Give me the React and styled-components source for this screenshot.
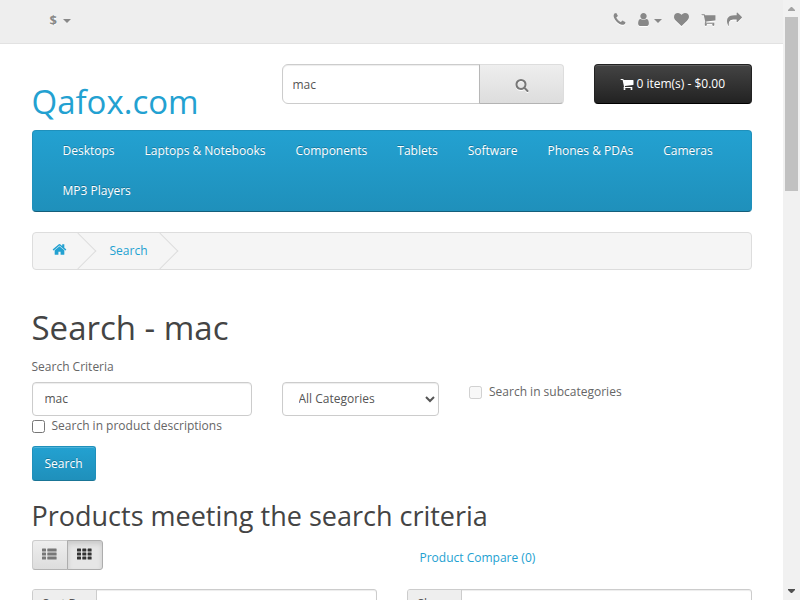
import React from "react";
import styled, { createGlobalStyle, css } from "styled-components";

const Global = createGlobalStyle`
  *, *::before, *::after { box-sizing: border-box; }
  html, body { margin: 0; overflow: hidden; background: #fff; }
  body, input, select, button {
    font-family: "Open Sans", sans-serif;
    font-size: 12px;
    line-height: 20px;
    font-weight: 400;
    color: #666;
  }
  h1, h2, p { margin: 0; font-weight: 400; }
`;

const icons = {
  phone: "M1600 1240q0 27-10 70.5t-21 68.5q-21 50-122 106-94 51-186 51-27 0-53-3.5t-57-12.5-47-14.5-55.5-20.5-49.5-18q-98-35-175-83-127-79-264-216t-216-264q-48-77-83-175-3-9-18-49.5t-20.5-55.5-14.5-47-12.5-57-3.5-53q0-92 51-186 56-101 106-122 25-11 68.5-21t70.5-10q14 0 21 3 18 6 53 76 11 19 30 54t35 63.5 31 53.5q3 4 17.5 25t21.5 35.5 7 28.5q0 20-28.5 50t-62 55-62 53-28.5 46q0 9 5 22.5t8.5 20.5 14 24 11.5 19q76 137 174 235t235 174q2 1 19 11.5t24 14 20.5 8.5 22.5 5q18 0 46-28.5t53-62 55-62 50-28.5q14 0 28.5 7t35.5 21.5 25 17.5q25 15 53.5 31t63.5 35 54 30q70 35 76 53 3 7 3 21z",
  user: "M1536 1399q0 109-62.5 187t-150.5 78h-854q-88 0-150.5-78t-62.5-187q0-85 8.5-160.5t31.5-152 58.5-131 94-89 134.5-34.5q131 128 313 128t313-128q76 0 134.5 34.5t94 89 58.5 131 31.5 152 8.5 160.5zm-256-887q0 159-112.5 271.5t-271.5 112.5-271.5-112.5-112.5-271.5 112.5-271.5 271.5-112.5 271.5 112.5 112.5 271.5z",
  heart: "M896 1664q-26 0-44-18l-624-602q-10-8-27.5-26t-55.5-65.5-68-97.5-53.5-121-23.5-138q0-220 127-344t351-124q62 0 126.5 21.5t120 58 95.5 68.5 76 68q36-36 76-68t95.5-68.5 120-58 126.5-21.5q224 0 351 124t127 344q0 221-229 450l-623 600q-18 18-44 18z",
  cart: "M704 1536q0 52-38 90t-90 38-90-38-38-90 38-90 90-38 90 38 38 90zm896 0q0 52-38 90t-90 38-90-38-38-90 38-90 90-38 90 38 38 90zm128-1088v512q0 24-16.5 42.5t-40.5 21.5l-1044 122q13 60 13 70 0 16-24 64h920q26 0 45 19t19 45-19 45-45 19h-1024q-26 0-45-19t-19-45q0-11 8-31.5t16-36 21.5-40 15.5-29.5l-177-823h-204q-26 0-45-19t-19-45 19-45 45-19h256q16 0 28.5 6.5t19.5 15.5 13 24.5 8 26 5.5 29.5 4.5 26h1201q26 0 45 19t19 45z",
  share: "M1792 640q0 26-19 45l-512 512q-19 19-45 19t-45-19-19-45v-256h-224q-98 0-175.5 6t-154 21.5-133 42.5-105.5 69.5-80 101-48.5 138.5-17.5 181q0 55 5 123 0 6 2.5 23.5t2.5 26.5q0 15-8.5 25t-23.5 10q-16 0-28-17-7-9-13-22t-13.5-30-10.5-24q-127-285-127-451 0-199 53-333 162-403 875-403h224v-256q0-26 19-45t45-19 45 19l512 512q19 19 19 45z",
  search: "M1216 832q0-185-131.5-316.5t-316.5-131.5-316.5 131.5-131.5 316.5 131.5 316.5 316.5 131.5 316.5-131.5 131.5-316.5zm512 832q0 52-38 90t-90 38q-54 0-90-38l-343-342q-179 124-399 124-143 0-273.5-55.5t-225-150-150-225-55.5-273.5 55.5-273.5 150-225 225-150 273.5-55.5 273.5 55.5 225 150 150 225 55.5 273.5q0 220-124 399l343 343q37 37 37 90z",
  home: "M1472 992v480q0 26-19 45t-45 19h-384v-384h-256v384h-384q-26 0-45-19t-19-45v-480q0-1 .5-3t.5-3l575-474 575 474q1 2 1 6zm223-69l-62 74q-8 9-21 11h-3q-13 0-21-7l-692-577-692 577q-12 8-24 7-13-2-21-11l-62-74q-8-10-7-23.5t11-21.5l719-599q32-26 76-26t76 26l244 204v-195q0-14 9-23t23-9h192q14 0 23 9t9 23v408l219 182q10 8 11 21.5t-7 23.5z",
};

const Svg = styled.svg`
  display: block;
  flex: none;
  fill: currentColor;
  filter: ${(p) => p.$glow && "drop-shadow(0 1px 0 #fff)"};
`;

function Icon({ name, size = 14, glow }) {
  return (
    <Svg width={size} height={size} viewBox="0 0 1792 1792" $glow={glow}>
      <path d={icons[name]} />
    </Svg>
  );
}

const Screen = styled.div`
  display: flex;
  width: 800px;
  height: 600px;
  overflow: hidden;
`;
const Page = styled.div`
  flex: 1;
  min-width: 0;
  overflow: hidden;
`;
const Container = styled.div`
  width: 720px;
  margin-left: 31.5px;
`;

const TopBar = styled.nav`
  height: 44px;
  background: #eee;
  border-bottom: 1px solid #e2e2e2;
  color: #888;
`;
const TopBarInner = styled(Container)`
  display: flex;
  justify-content: space-between;
  padding: 10px 9.5px 0 18px;
`;
const Currency = styled.div`
  display: flex;
  align-items: center;
  gap: 6px;
  height: 20px;
  font-size: 13px;
  font-weight: 700;
  text-shadow: 0 1px 0 #fff;
`;
const Caret = styled.span`
  border: 4.5px solid transparent;
  border-top: 4.5px solid currentColor;
  border-bottom: 0;
  margin-top: 2px;
`;
const TopLinks = styled.div`
  display: flex;
  align-items: center;
  gap: 11.5px;
  height: 18px;
`;
const Account = styled.span`
  display: flex;
  align-items: center;
  gap: 2.5px;
  margin-left: -2.5px;
  margin-right: 1px;
  ${Caret} { border-width: 4px 4px 0; margin-top: 4px; }
`;

const Header = styled(Container)`
  display: flex;
  height: 66px;
  margin-top: 20px;
`;
const Logo = styled.h1`
  width: 250px;
  padding-top: 20px;
  font-size: 33px;
  line-height: 36px;
  color: #23a1d1;
`;
const SearchBox = styled.div`
  display: flex;
  width: 282px;
  height: 40px;
`;

const raised = css`
  display: flex;
  align-items: center;
  justify-content: center;
  padding: 0;
  border: 1px solid;
`;
const Input = styled.input`
  width: ${(p) => p.$w}px;
  height: ${(p) => p.$h}px;
  padding: ${(p) => p.$drop || 0}px ${(p) => p.$pad}px 1px;
  border: 1px solid #ccc;
  border-radius: ${(p) => p.$radius || "4px"};
  background: #fff;
  color: #555;
  box-shadow: inset 0 1px 1px rgba(0, 0, 0, 0.075);
  outline: 0;
`;
const LookupButton = styled.button`
  ${raised}
  width: 85px;
  height: 40px;
  margin-left: -1px;
  padding: 2px 0 0 1px;
  color: #777;
  background: linear-gradient(#eee, #ddd);
  border-color: #ddd #ddd #b3b3b3 #b7b7b7;
  border-radius: 0 4px 4px 0;
`;
const CartButton = styled.button`
  ${raised}
  gap: 2.5px;
  width: 158px;
  height: 40px;
  margin-left: 30px;
  padding-bottom: 1px;
  color: #fff;
  background: linear-gradient(#444, #222);
  border-color: #222 #222 #000;
  border-radius: 4px;
  box-shadow: inset 0 1px 0 rgba(255, 255, 255, 0.15);
`;

const Menu = styled(Container)`
  display: flex;
  flex-wrap: wrap;
  align-content: flex-start;
  height: 82px;
  padding-left: 15px;
  background: linear-gradient(#23a1d1, #1f90bb);
  border: 1px solid;
  border-color: #1f90bb #1f90bb #145e7a;
  border-radius: 4px;
`;
const MenuItem = styled.a`
  height: 40px;
  padding: 10px 15px;
  color: #fff;
  text-shadow: 0 -1px 0 rgba(0, 0, 0, 0.25);
  white-space: nowrap;
`;

const Breadcrumb = styled(Container)`
  display: flex;
  height: 38px;
  margin-top: 20px;
  margin-bottom: 40px;
  border: 1px solid #ddd;
  border-radius: 4px;
  background: #f5f5f5;
  overflow: hidden;
`;
const Crumb = styled.span`
  position: relative;
  display: flex;
  align-items: center;
  width: ${(p) => p.$w}px;
  padding-left: ${(p) => p.$pad}px;
  color: #23a1d1;
  ${Svg} { margin-bottom: 3px; }
  &::after {
    content: "";
    position: absolute;
    top: 5px;
    right: -0.5px;
    width: 26px;
    height: 26px;
    border: 1px solid #ddd;
    border-left: 0;
    border-bottom: 0;
    transform: rotate(45deg);
  }
`;

const Title = styled.h1`
  font-size: 33px;
  line-height: 36px;
  color: #444;
`;
const Subtitle = styled.h2`
  margin-top: 20px;
  font-size: 27px;
  line-height: 30px;
  color: #444;
`;
const Criteria = styled.p`
  margin-top: 11px;
  height: 25px;
`;
const FieldRow = styled.div`
  display: flex;
  gap: 30px;
  height: 34px;
`;
const Select = styled.select`
  width: 157px;
  height: 34px;
  padding: 0 0 1px 12px;
  border: 1px solid #ccc;
  border-radius: 4px;
  background: #fff;
  color: #555;
  box-shadow: inset 0 1px 1px rgba(0, 0, 0, 0.075);
`;
const CheckLabel = styled.label`
  display: flex;
  align-items: center;
  gap: ${(p) => p.$gap || 7}px;
  height: 20px;
  input { width: 13px; height: 13px; margin: 1px 0 0; }
`;
const SearchButton = styled.button`
  ${raised}
  width: 64px;
  height: 35px;
  margin-top: 10px;
  color: #fff;
  background: linear-gradient(#23a1d1, #1f90bb);
  border-color: #1f90bb #1f90bb #197596;
  border-radius: 3px;
  box-shadow: inset 0 1px 0 rgba(255, 255, 255, 0.2);
  text-shadow: 0 -1px 0 rgba(0, 0, 0, 0.25);
`;

const Toolbar = styled.div`
  display: flex;
  height: 30px;
  margin-top: 9px;
`;
const ViewButton = styled.button`
  ${raised}
  width: 36px;
  height: 30px;
  padding-bottom: 2px;
  color: #777;
  background: linear-gradient(#eee, #ddd);
  border-color: #ccc #ccc #b3b3b3;
  border-radius: 3px 0 0 3px;
  ${(p) =>
    p.$active &&
    css`
      margin-left: -1px;
      color: #333;
      background: #e6e6e6;
      border-color: #adadad;
      border-radius: 0 3px 3px 0;
      box-shadow: inset 0 3px 5px rgba(0, 0, 0, 0.125);
    `}
`;
const Compare = styled.a`
  margin: 8px 0 0 317px;
  color: #23a1d1;
`;
const Filters = styled.div`
  display: flex;
  gap: 30px;
  margin-top: 19px;
`;
const Group = styled.div`
  display: flex;
  width: 345px;
  height: 30px;
  border: 1px solid #ccc;
  border-radius: 3px;
  box-shadow: inset 0 1px 1px rgba(0, 0, 0, 0.075);
  overflow: hidden;
`;
const Addon = styled.label`
  width: ${(p) => p.$w}px;
  padding: 4px 10px;
  background: #eee;
  border-right: 1px solid #ccc;
  color: #555;
  white-space: nowrap;
`;

const Scrollbar = styled.div`
  display: flex;
  flex-direction: column;
  align-items: center;
  justify-content: space-between;
  width: 17px;
  height: 600px;
  padding: 7px 0 7px;
  background: #f1f1f1;
`;
const Thumb = styled.div`
  width: 13px;
  height: 174px;
  margin: 6px 0 auto;
  background: #c1c1c1;
`;
const Triangle = styled(Svg)`
  color: ${(p) => (p.$up ? "#a3a3a3" : "#505050")};
  transform: ${(p) => p.$up && "rotate(180deg)"};
`;

function Arrow({ up }) {
  return (
    <Triangle width="7" height="4" viewBox="0 0 7 4" $up={up}>
      <path d="M0 0h7v1l-3 3h-1l-3-3z" />
    </Triangle>
  );
}

const categories = [
  "Desktops", "Laptops & Notebooks", "Components", "Tablets",
  "Software", "Phones & PDAs", "Cameras", "MP3 Players",
];

function ViewIcon({ grid }) {
  const cols = grid ? [[0, 4], [5.3, 4], [10.6, 4]] : [[0, 4], [5.3, 9.3]];
  return (
    <Svg width="15" height="12" viewBox="0 0 15 12">
      {[0.4, 4.4, 8.4].map((y) =>
        cols.map(([x, w]) => <rect key={`${x}-${y}`} x={x} y={y} width={w} height="3" rx=".5" />)
      )}
    </Svg>
  );
}

export default function App() {
  return (
    <Screen>
      <Global />
      <Page>
        <TopBar>
          <TopBarInner>
            <Currency>$ <Caret /></Currency>
            <TopLinks>
              <Icon name="phone" size={15} glow />
              <Account><Icon name="user" size={15} glow /><Caret /></Account>
              <Icon name="heart" size={15} glow />
              <Icon name="cart" size={15} glow />
              <Icon name="share" size={15} glow />
            </TopLinks>
          </TopBarInner>
        </TopBar>
        <Header>
          <Logo>Qafox.com</Logo>
          <SearchBox>
            <Input $w={198} $h={40} $pad={10} $drop={2} $radius="6px 0 0 6px" defaultValue="mac" />
            <LookupButton><Icon name="search" glow /></LookupButton>
          </SearchBox>
          <CartButton><Icon name="cart" />0 item(s) - $0.00</CartButton>
        </Header>
        <Menu as="nav">
          {categories.map((c) => <MenuItem key={c}>{c}</MenuItem>)}
        </Menu>
        <Breadcrumb>
          <Crumb $w={58} $pad={19.5}><Icon name="home" size={15} /></Crumb>
          <Crumb $w={82} $pad={19}>Search</Crumb>
        </Breadcrumb>
        <Container as="main">
          <Title>Search - mac</Title>
          <Criteria>Search Criteria</Criteria>
          <FieldRow>
            <Input $w={220} $h={34} $pad={12} defaultValue="mac" />
            <Select defaultValue="all"><option value="all">All Categories</option></Select>
            <CheckLabel $gap={7.5}><input type="checkbox" disabled />Search in subcategories</CheckLabel>
          </FieldRow>
          <CheckLabel><input type="checkbox" />Search in product descriptions</CheckLabel>
          <SearchButton>Search</SearchButton>
          <Subtitle>Products meeting the search criteria</Subtitle>
          <Toolbar>
            <ViewButton><ViewIcon /></ViewButton>
            <ViewButton $active><ViewIcon grid /></ViewButton>
            <Compare>Product Compare (0)</Compare>
          </Toolbar>
          <Filters>
            <Group><Addon $w={64}>Sort By:</Addon></Group>
            <Group><Addon $w={54}>Show:</Addon></Group>
          </Filters>
        </Container>
      </Page>
      <Scrollbar>
        <Arrow up />
        <Thumb />
        <Arrow />
      </Scrollbar>
    </Screen>
  );
}
